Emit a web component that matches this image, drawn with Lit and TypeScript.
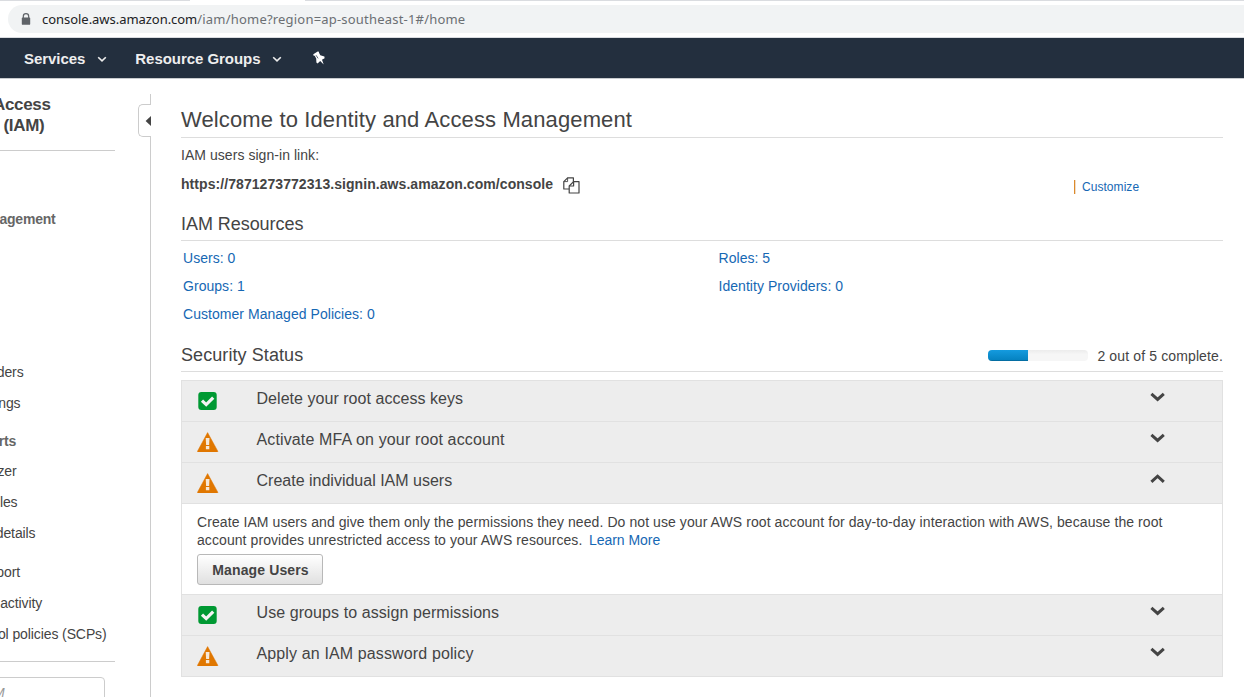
import { LitElement, html, svg, css } from "lit";
import { styleMap } from "lit/directives/style-map.js";

type Status = "done" | "warning";

interface Check {
  title: string;
  status: Status;
  tracking: number;
  open?: boolean;
}

interface SideRow {
  text: string;
  end: number;
  kind: "title" | "group" | "link";
  gap: number;
}

const SIDE_TOP: SideRow[] = [
  { text: "Access", end: 50.5, kind: "title", gap: 0 },
  { text: "(IAM)", end: 44.3, kind: "title", gap: 0 },
];

const SIDE_ROWS: SideRow[] = [
  { text: "agement", end: 55.6, kind: "group", gap: 58 },
  { text: "ders", end: 23.6, kind: "link", gap: 133 },
  { text: "ngs", end: 20.5, kind: "link", gap: 11 },
  { text: "rts", end: 16, kind: "group", gap: 18 },
  { text: "zer", end: 16.6, kind: "link", gap: 10 },
  { text: "les", end: 17.5, kind: "link", gap: 11 },
  { text: "details", end: 35.5, kind: "link", gap: 11 },
  { text: "port", end: 20, kind: "link", gap: 19 },
  { text: "activity", end: 42.2, kind: "link", gap: 11 },
  { text: "ol policies (SCPs)", end: 106.6, kind: "link", gap: 11 },
];

const CHECKS: Check[] = [
  { title: "Delete your root access keys", status: "done", tracking: 0.04 },
  { title: "Activate MFA on your root account", status: "warning", tracking: 0.134 },
  { title: "Create individual IAM users", status: "warning", tracking: 0, open: true },
  { title: "Use groups to assign permissions", status: "done", tracking: 0.08 },
  { title: "Apply an IAM password policy", status: "warning", tracking: 0.13 },
];

const lockIcon = svg`<svg class="lock" width="10" height="13" viewBox="0 0 10 13">
  <path d="M2.3 5.5V3.4a2.7 2.7 0 0 1 5.4 0v2.1" fill="none" stroke="#5f6368" stroke-width="1.2"/>
  <rect x="0.8" y="4.6" width="8.4" height="7.2" rx="0.9" fill="#5f6368"/></svg>`;

const caretIcon = svg`<svg class="caret" width="10" height="7" viewBox="0 0 10 7">
  <path d="M1.2 1.2L5 4.9L8.8 1.2" fill="none" stroke="#eee" stroke-width="1.6"/></svg>`;

const pinIcon = svg`<svg class="pin" width="14" height="15" viewBox="0 0 14 15">
  <path d="M1.3 3.2L5.7.4Q7.3.2 7 1.7L8.3 4.3L12.4 5.6L12.6 7.2L10 8.8L11.7 13.6L8.2 10L5.6 12.4L4.4 11.6L4.2 7.5L2.7 4.7Q1 5 1.3 3.2Z" fill="#fff"/>
  <path d="M4 4.2L6.1 7.4" stroke="#232f3e" stroke-width="0.7"/></svg>`;

const copyIcon = svg`<svg width="17" height="17" viewBox="0 0 17 17" fill="#fff" stroke="#444" stroke-width="1.2" stroke-linejoin="round">
  <path d="M4.6 .8H10.4V12H.8V4.6Z"/><path d="M4.6 .8V4.6H.8" fill="none" stroke-width=".9"/>
  <path d="M10.6 4.6H16V16H6.2V9Z"/><path d="M10.6 4.6V9H6.2" fill="none"/></svg>`;

const doneIcon = svg`<svg width="22" height="20" viewBox="0 0 22 20">
  <rect x="1.3" y="1" width="18.4" height="18" rx="3" fill="#093"/>
  <path d="M5 9.6L9.2 13.6L16.2 6.6" fill="none" stroke="#f4f4f4" stroke-width="3.2"/></svg>`;

const warningIcon = svg`<svg width="22" height="20" viewBox="0 0 22 20">
  <path d="M10.6 .6L20.8 19.2Q21 20 20.2 20H1Q0.2 20 .5 19.2Z" fill="#e07700" stroke="#e07700" stroke-width=".5" stroke-linejoin="round"/>
  <path d="M8.7 6H12.5L12.1 13H9.1ZM8.9 14H12.3V17.2H8.9Z" fill="#f6e8d8"/></svg>`;

const chevron = (up: boolean) => svg`<svg width="16" height="10" viewBox="0 0 16 10">
  <path d="${up ? "M1.4 7.8L7.6 2.2L13.8 7.8" : "M1.4 1.8L7.6 7.4L13.8 1.8"}" fill="none" stroke="#444" stroke-width="3"/></svg>`;

class AppRoot extends LitElement {
  static styles = css`
    :host { display: block; width: 100%; height: 697px; overflow: hidden; background: #fff; color: #444; font: 14px/20px "Liberation Sans", Arial, sans-serif; }
    * { box-sizing: border-box; }
    svg { display: block; flex: none; }
    a { color: #1668b4; text-decoration: none; }
    h1, h2, p { margin: 0; font-weight: 400; }

    .browser { height: 38px; padding: 5px 0 4px 8px; border-bottom: 1px solid #dadce0; position: relative; }
    .tabs { position: absolute; left: 0; top: 0; width: 100%; display: flex; justify-content: space-between; }
    .tabs i { height: 1px; background: #dadce0; }
    .tab-left { width: 190px; }
    .tab-right { width: 939px; }
    .omnibox { height: 28px; border-radius: 14px 0 0 14px; background: #f1f3f4; display: flex; align-items: center; padding-left: 13px; font: 13px/28px "Noto Sans", "Open Sans", sans-serif; }
    .lock { margin-right: 11px; }
    .domain { color: #202124; letter-spacing: -0.04px; }
    .path { color: #6b6f73; letter-spacing: 0.2px; }

    .nav { height: 41px; background: #232f3e; border-bottom: 1px solid #c8cbce; display: flex; align-items: center; padding: 1px 0 0 24px; color: #eee; font-size: 15px; line-height: 21px; font-weight: 700; }
    .nav span { letter-spacing: -0.05px; margin-right: 11.5px; }
    .nav .caret { margin: 1px 28.5px 0 0; }
    .nav .pin { margin-left: 1.5px; margin-top: -1px; }

    .body { display: flex; height: 618px; }
    .side { width: 138px; padding-top: 15px; flex: none; overflow: hidden; }
    .row { display: flex; justify-content: flex-end; white-space: nowrap; letter-spacing: -0.1px; }
    .title { font-size: 17px; line-height: 21px; font-weight: 700; letter-spacing: -0.35px; }
    .group { font-weight: 700; color: #666; letter-spacing: -0.2px; }
    .rule { width: 115px; height: 1px; background: #ccc; }
    .rule-top { margin-top: 14px; }
    .rule-bottom { margin-top: 17px; }
    .search { margin: 15px 0 0 -30px; width: 135px; height: 32px; border: 1px solid #ccc; border-radius: 4px; display: flex; align-items: center; padding-left: 22px; color: #999; font-style: italic; }

    .divider { width: 13px; flex: none; padding-top: 15px; display: flex; flex-direction: column; }
    .line { border-right: 1px solid #ccc; }
    .line-top { height: 10px; }
    .line-rest { flex: 1; }
    .handle { height: 33px; border: 1px solid #ccc; border-right: 0; border-radius: 5px 0 0 5px; display: flex; align-items: center; justify-content: flex-end; }

    .main { margin-left: 30px; width: 1042px; flex: none; display: flex; flex-direction: column; }
    h1 { height: 59px; padding-top: 27px; font-size: 22px; line-height: 28px; letter-spacing: 0.125px; border-bottom: 1px solid #ddd; }
    h2 { font-size: 18px; line-height: 24px; }
    .intro { padding-top: 7px; font-size: 14px; letter-spacing: 0.05px; }
    .signin { display: flex; align-items: center; height: 20px; margin-top: 9px; }
    .signin b { width: 382px; font-size: 14px; letter-spacing: 0.065px; }
    .signin .copy { margin-top: 3px; }
    .customize { display: flex; align-items: center; margin-left: 494px; padding-top: 5px; font-size: 12px; gap: 6px; letter-spacing: 0.05px; }
    .customize i { width: 2px; height: 14px; background: linear-gradient(90deg, #dc8a2c 60%, #f0ddc8 60%); }
    .resources-head { margin-top: 18px; height: 29px; border-bottom: 1px solid #ddd; letter-spacing: -0.05px; }
    .resources { display: grid; grid-template-columns: 535.5px 1fr; grid-auto-rows: 28px; padding: 7px 0 0 2px; letter-spacing: 0.04px; }
    .security-head { display: flex; justify-content: space-between; height: 29px; border-bottom: 1px solid #ddd; margin-top: 11px; }
    .security-head h2 { letter-spacing: 0.08px; }
    .progress { display: flex; align-items: center; height: 26px; gap: 9px; letter-spacing: 0.13px; }
    .bar { width: 100px; height: 11px; margin-bottom: 1px; border-radius: 4px; background: linear-gradient(#ececec, #f6f6f6 40%, #f6f6f6); overflow: hidden; }
    .fill { height: 100%; background: linear-gradient(#149bdf, #0480be); box-shadow: inset 0 -1px 0 rgba(0, 0, 0, .15); }

    .table { margin-top: 8px; border: 1px solid #e1e1e1; }
    .check { height: 41px; border-bottom: 1px solid #e1e1e1; background: #ededed; display: flex; align-items: flex-start; padding: 9px 56px 0 15px; font-size: 16px; line-height: 20px; }
    .check:last-child { height: 40px; border-bottom: 0; }
    .check .icon { margin-top: 1px; width: 59.5px; }
    .check .name { flex: 1; margin-top: -1px; }
    .check .chev { margin-top: 2px; }
    .panel { height: 91px; border-bottom: 1px solid #e1e1e1; padding: 9px 15px 0; line-height: 18px; }
    .panel p { white-space: nowrap; letter-spacing: 0.079px; }
    .panel a { margin-left: 2.5px; letter-spacing: -0.03px; }
    .button { margin-top: 5px; width: 126px; height: 31px; border: 1px solid #b8b8b8; border-radius: 3px; background: linear-gradient(#fff, #e0e0e0); color: #444; font: 700 14px/28px "Liberation Sans", Arial, sans-serif; letter-spacing: 0.13px; padding: 1px 0 0 1px; display: block; text-align: center; }
  `;

  private sideRow(r: SideRow) {
    return html`<div class="row ${r.kind}" style=${styleMap({ width: `${r.end}px`, marginTop: `${r.gap}px` })}>${r.text}</div>`;
  }

  private check(c: Check) {
    return html`
      <div class="check">
        <div class="icon">${c.status === "done" ? doneIcon : warningIcon}</div>
        <div class="name" style=${styleMap({ letterSpacing: `${c.tracking}px` })}>${c.title}</div>
        <div class="chev">${chevron(!!c.open)}</div>
      </div>
      ${c.open
        ? html`<div class="panel">
            <p>Create IAM users and give them only the permissions they need. Do not use your AWS root account for day-to-day interaction with AWS, because the root<br />account provides unrestricted access to your AWS resources. <a>Learn More</a></p>
            <button class="button">Manage Users</button>
          </div>`
        : ""}`;
  }

  render() {
    const done = CHECKS.filter((c) => c.status === "done").length;
    return html`
      <div class="browser">
        <div class="tabs"><i class="tab-left"></i><i class="tab-right"></i></div>
        <div class="omnibox">${lockIcon}<span class="domain">console.aws.amazon.com</span><span class="path">/iam/home?region=ap-southeast-1#/home</span></div>
      </div>
      <div class="nav"><span>Services</span>${caretIcon}<span>Resource Groups</span>${caretIcon}${pinIcon}</div>
      <div class="body">
        <div class="side">
          ${SIDE_TOP.map((r) => this.sideRow(r))}
          <div class="rule rule-top"></div>
          ${SIDE_ROWS.map((r) => this.sideRow(r))}
          <div class="rule rule-bottom"></div>
          <div class="search">M</div>
        </div>
        <div class="divider">
          <div class="line line-top"></div>
          <div class="handle"><svg width="6" height="10" viewBox="0 0 6 10"><path d="M6 0V10L.6 5Z" fill="#444" /></svg></div>
          <div class="line line-rest"></div>
        </div>
        <div class="main">
          <h1>Welcome to Identity and Access Management</h1>
          <p class="intro">IAM users sign-in link:</p>
          <div class="signin"><b>https://7871273772313.signin.aws.amazon.com/console</b><span class="copy">${copyIcon}</span>
            <div class="customize"><i></i><a>Customize</a></div></div>
          <h2 class="resources-head">IAM Resources</h2>
          <div class="resources">
            <a>Users: 0</a><a>Roles: 5</a><a>Groups: 1</a><a>Identity Providers: 0</a><a>Customer Managed Policies: 0</a>
          </div>
          <div class="security-head">
            <h2>Security Status</h2>
            <div class="progress">
              <div class="bar"><div class="fill" style=${styleMap({ width: `${(done / CHECKS.length) * 100}%` })}></div></div>
              <span>${done} out of ${CHECKS.length} complete.</span>
            </div>
          </div>
          <div class="table">${CHECKS.map((c) => this.check(c))}</div>
        </div>
      </div>`;
  }
}
customElements.define("app-root", AppRoot);
